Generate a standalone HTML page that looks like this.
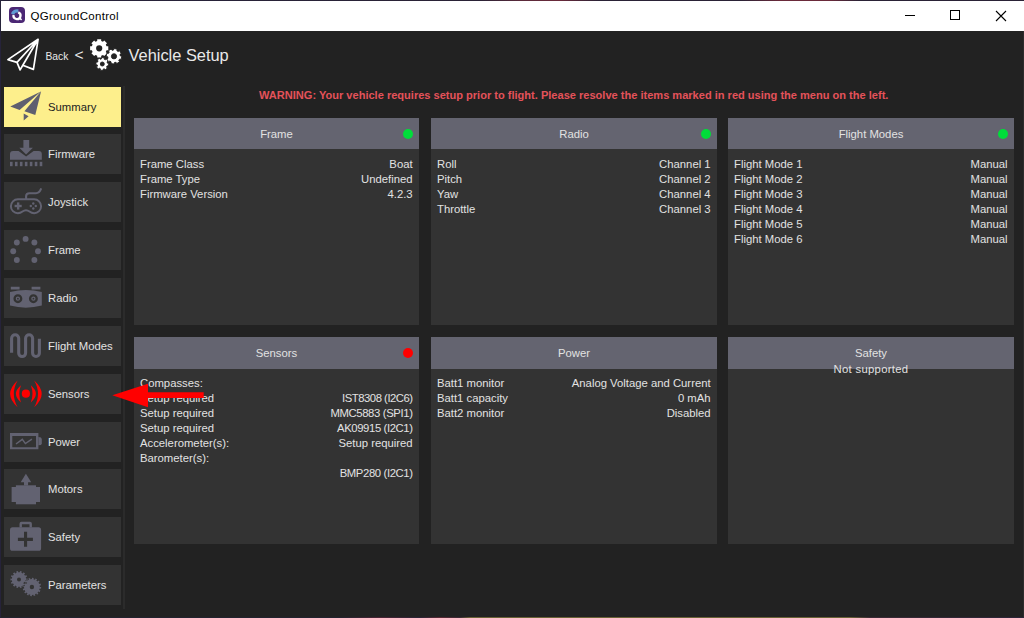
<!DOCTYPE html>
<html><head><meta charset="utf-8">
<style>
*{margin:0;padding:0;box-sizing:border-box}
html,body{width:1024px;height:618px;overflow:hidden;background:#222222;font-family:"Liberation Sans",sans-serif}
#win{position:absolute;left:0;top:0;width:1024px;height:618px;background:#222222}
#bl{position:absolute;left:0;top:0;width:1px;height:618px;background:#26233a}
#bt{position:absolute;left:0;top:0;width:1024px;height:1px;background:#2a1e2c}
#bb{position:absolute;left:0;top:617px;width:1024px;height:1px;background:#23232f}
#title{position:absolute;left:1px;top:1px;width:1023px;height:30px;background:#ffffff}
#title .t{position:absolute;left:29.5px;top:7.6px;font-size:11.5px;letter-spacing:0.28px;color:#000;line-height:14px;white-space:nowrap}
.abs{position:absolute}
.txt{position:absolute;white-space:nowrap;color:#e2e2e2;font-size:11.3px;line-height:13px}
.btn{position:absolute;left:4px;width:117px;height:40px;background:#333333}
.btn .l{position:absolute;left:44px;top:13px;font-size:11.3px;line-height:14px;color:#e2e2e2;white-space:nowrap}
.btn svg{position:absolute;left:0;top:0}
.panel{position:absolute;width:286px;background:#333333}
.panel .h{position:absolute;left:0;top:0;width:100%;height:31px;background:#646470}
.panel .h .ht{position:absolute;left:0;width:100%;top:9px;text-align:center;color:#e2e2e2;font-size:11.3px;line-height:14px}
.dot{position:absolute;width:10.5px;height:10.5px;border-radius:50%;background:#00dd33}
.row{position:absolute;left:6px;right:6.4px;height:15px;font-size:11.3px;line-height:15px;color:#e2e2e2;white-space:nowrap}
.row .r{position:absolute;right:0;top:0}
.row .lft{position:absolute;left:0;top:0}
</style></head>
<body>
<div id="win">
<div id="title">
  <svg class="abs" style="left:8px;top:6px" width="16" height="16" viewBox="0 0 16 16">
    <rect x="0" y="0" width="16" height="16" rx="4" fill="#4b2774"/>
    <path d="M9.20 5.31 A3.5 3.5 0 1 1 4.55 7.99" fill="none" stroke="#fff" stroke-width="2.3"/>
    <path d="M10.3 10.8 L12.6 12.9" stroke="#fff" stroke-width="1.5"/>
    <path d="M5.15 7.67 L1.91 6.62 A6.4 6.4 0 0 1 9.66 2.42 L8.78 5.70 A3.0 3.0 0 0 0 5.15 7.67 Z" fill="#5f9ad3"/>
  </svg>
  <div class="t">QGroundControl</div>
  <div class="abs" style="left:904px;top:14px;width:10px;height:1px;background:#000"></div>
  <div class="abs" style="left:949px;top:9px;width:10px;height:10px;border:1px solid #000"></div>
  <svg class="abs" style="left:994px;top:9px" width="12" height="12" viewBox="0 0 12 12"><path d="M1 1 L11 11 M11 1 L1 11" stroke="#000" stroke-width="1.1"/></svg>
</div>

<!-- header -->
<svg class="abs" style="left:0;top:32px" width="40" height="44" viewBox="0 32 40 44">
  <path d="M38.1 39.3 L7.9 59.6 L17 62.4 L20.1 69.9 L22.8 65.3 L33.4 69.4 Z M38.1 39.3 L17 62.4 M38.1 39.3 L22.8 65.3" fill="none" stroke="#ffffff" stroke-width="1.7" stroke-linejoin="round"/>
</svg>
<div class="txt" style="left:45.5px;top:50px;font-size:10.3px;line-height:14px;color:#e9e9e9">Back</div>
<div class="txt" style="left:74.6px;top:46px;font-size:15.5px;line-height:18px;color:#e9e9e9">&lt;</div>
<svg class="abs" id="gears" style="left:86px;top:36px" width="40" height="38" viewBox="86 36 40 38"><path fill="#ffffff" fill-rule="evenodd" d="M106.53 46.29 L108.29 46.34 L108.29 50.26 L106.53 50.31 L105.80 52.07 L107.01 53.34 L104.24 56.11 L102.97 54.90 L101.21 55.63 L101.16 57.39 L97.24 57.39 L97.19 55.63 L95.43 54.90 L94.16 56.11 L91.39 53.34 L92.60 52.07 L91.87 50.31 L90.11 50.26 L90.11 46.34 L91.87 46.29 L92.60 44.53 L91.39 43.26 L94.16 40.49 L95.43 41.70 L97.19 40.97 L97.24 39.21 L101.16 39.21 L101.21 40.97 L102.97 41.70 L104.24 40.49 L107.01 43.26 L105.80 44.53 Z M102.30 48.30 A3.1 3.1 0 1 0 96.10 48.30 A3.1 3.1 0 1 0 102.30 48.30 Z"/><path fill="#ffffff" fill-rule="evenodd" stroke="#222222" stroke-width="0.9" d="M120.29 55.88 L121.80 56.21 L121.15 59.42 L119.63 59.14 L118.74 60.45 L119.58 61.75 L116.84 63.56 L115.97 62.28 L114.42 62.59 L114.09 64.10 L110.88 63.45 L111.16 61.93 L109.85 61.04 L108.55 61.88 L106.74 59.14 L108.02 58.27 L107.71 56.72 L106.20 56.39 L106.85 53.18 L108.37 53.46 L109.26 52.15 L108.42 50.85 L111.16 49.04 L112.03 50.32 L113.58 50.01 L113.91 48.50 L117.12 49.15 L116.84 50.67 L118.15 51.56 L119.45 50.72 L121.26 53.46 L119.98 54.33 Z M116.60 56.30 A2.6 2.6 0 1 0 111.40 56.30 A2.6 2.6 0 1 0 116.60 56.30 Z"/><path fill="#ffffff" fill-rule="evenodd" stroke="#222222" stroke-width="0.9" d="M107.43 63.14 L108.76 63.27 L108.49 66.00 L107.15 65.87 L106.54 67.01 L107.38 68.05 L105.26 69.79 L104.41 68.75 L103.16 69.13 L103.03 70.46 L100.30 70.19 L100.43 68.85 L99.29 68.24 L98.25 69.08 L96.51 66.96 L97.55 66.11 L97.17 64.86 L95.84 64.73 L96.11 62.00 L97.45 62.13 L98.06 60.99 L97.22 59.95 L99.34 58.21 L100.19 59.25 L101.44 58.87 L101.57 57.54 L104.30 57.81 L104.17 59.15 L105.31 59.76 L106.35 58.92 L108.09 61.04 L107.05 61.89 Z M104.30 64.00 A2.0 2.0 0 1 0 100.30 64.00 A2.0 2.0 0 1 0 104.30 64.00 Z"/></svg>
<div class="txt" style="left:128.5px;top:46px;font-size:16.4px;line-height:19px;color:#e9e9e9">Vehicle Setup</div>
<div class="abs" style="left:123px;top:86px;width:2px;height:523px;background:#2b2b2b"></div>
<!-- warning -->
<div class="txt" style="left:259px;top:89px;font-size:11.05px;font-weight:bold;color:#e4525a">WARNING: Your vehicle requires setup prior to flight. Please resolve the items marked in red using the menu on the left.</div>

<!-- sidebar -->
<div class="btn" style="top:86.60px;background:#fdef8c"><svg id="ic0" width="44" height="40" viewBox="0 0 44 40"><path fill="#5f5f6f" d="M6.3 19.4 L36.9 4.4 L15.6 22.9 Z M37.1 4.3 L20.4 24.2 L31.3 28 Z M19.7 26.6 L24.6 29.3 L19.7 33.5 Z"/></svg><div class="l" style="color:#222">Summary</div></div>
<div class="btn" style="top:134.45px"><svg id="ic1" width="44" height="40" viewBox="0 0 44 40"><g fill="#626271"><rect x="19.4" y="6" width="5.8" height="8"/><path d="M15.3 13.8 L28.9 13.8 L22.1 20.6 Z"/><path d="M6 25.7 L6 20 Q6 16.9 9.1 16.9 L14.6 16.9 L22.1 22.4 L29.6 16.9 L34.7 16.9 Q37.8 16.9 37.8 20 L37.8 25.7 Z"/><rect x="6.00" y="27.8" width="2.6" height="4.4"/><rect x="10.95" y="27.8" width="2.6" height="4.4"/><rect x="15.90" y="27.8" width="2.6" height="4.4"/><rect x="20.85" y="27.8" width="2.6" height="4.4"/><rect x="25.80" y="27.8" width="2.6" height="4.4"/><rect x="30.75" y="27.8" width="2.6" height="4.4"/><rect x="35.70" y="27.8" width="2.6" height="4.4"/></g></svg><div class="l">Firmware</div></div>
<div class="btn" style="top:182.30px"><svg id="ic2" width="44" height="40" viewBox="0 0 44 40"><g fill="none" stroke="#626271" stroke-width="2"><path d="M13.85 17.3 L30.15 17.3 A6.95 6.95 0 0 1 30.15 31.2 Q27.6 31.2 25.5 29.5 Q23.8 28.2 22 28.2 Q20.2 28.2 18.5 29.5 Q16.4 31.2 13.85 31.2 A6.95 6.95 0 0 1 13.85 17.3 Z"/><path d="M22.1 17 L22.1 14.3 Q22.1 11.2 25.5 11.2 L32 11.2 Q35.2 11.2 36.9 7.2" stroke-width="2.1" stroke-linecap="round"/></g>
<g fill="#626271"><rect x="12.95" y="20.4" width="2.4" height="7.2"/><rect x="10.6" y="22.8" width="7.1" height="2.4"/><circle cx="29.3" cy="21.5" r="1.2"/><circle cx="29.3" cy="26.5" r="1.2"/><circle cx="26.8" cy="24" r="1.2"/><circle cx="31.8" cy="24" r="1.2"/></g></svg><div class="l">Joystick</div></div>
<div class="btn" style="top:230.15px"><svg id="ic3" width="44" height="40" viewBox="0 0 44 40"><g fill="#626271"><circle cx="21.60" cy="8.90" r="2.95"/><circle cx="30.37" cy="12.53" r="2.95"/><circle cx="34.00" cy="21.30" r="2.95"/><circle cx="30.37" cy="30.07" r="2.95"/><circle cx="12.83" cy="30.07" r="2.95"/><circle cx="9.20" cy="21.30" r="2.95"/><circle cx="12.83" cy="12.53" r="2.95"/></g></svg><div class="l">Frame</div></div>
<div class="btn" style="top:278.00px"><svg id="ic4" width="44" height="40" viewBox="0 0 44 40"><g fill="#626271"><path d="M6.8 8.8 L15.6 8.8 L15.6 11.6 L6.8 11.6 Z M27.6 8.8 L36.4 8.8 L36.4 11.6 L27.6 11.6 Z"/>
<path d="M6 13.9 Q21.9 10 37.8 13.9 L37.8 27.5 Q21.9 31.8 6 27.5 Z"/></g>
<g fill="none" stroke="#333333" stroke-width="2.3"><circle cx="13.9" cy="20.7" r="3.3"/><circle cx="29.4" cy="20.7" r="3.3"/></g>
<g fill="#333333"><circle cx="13.9" cy="20.7" r="0.9"/><circle cx="29.4" cy="20.7" r="0.9"/></g></svg><div class="l">Radio</div></div>
<div class="btn" style="top:325.85px"><svg id="ic5" width="44" height="40" viewBox="0 0 44 40"><path fill="none" stroke="#626271" stroke-width="3.1" d="M7.6 26.7 L7.6 12.3 A3.55 3.55 0 0 1 14.7 12.3 L14.7 27.1 A3.45 3.45 0 0 0 21.6 27.1 L21.6 12.3 A3.5 3.5 0 0 1 28.6 12.3 L28.6 27.1 A3.4 3.4 0 0 0 35.4 27.1 L35.4 12.7"/></svg><div class="l">Flight Modes</div></div>
<div class="btn" style="top:373.70px"><svg id="ic6" width="44" height="40" viewBox="0 0 44 40"><g fill="#ff0000"><circle cx="21.9" cy="19.7" r="4.1"/><path d="M13.6 6.4 Q-1.40 19.85 13.60 33.30 Q6.00 19.85 13.60 6.40 Z M17 11.2 Q6.80 19.85 17.00 28.50 Q13.60 19.85 17.00 11.20 Z M30.2 6.4 Q45.20 19.85 30.20 33.30 Q37.80 19.85 30.20 6.40 Z M26.8 11.2 Q37.00 19.85 26.80 28.50 Q30.20 19.85 26.80 11.20 Z"/></g></svg><div class="l">Sensors</div></div>
<div class="btn" style="top:421.55px"><svg id="ic7" width="44" height="40" viewBox="0 0 44 40"><g fill="#626271"><path fill-rule="evenodd" d="M6 11 L34.4 11 L34.4 27.3 L6 27.3 Z M8.3 14.1 L32 14.1 L32 25.3 L8.3 25.3 Z"/><path d="M34.4 15.1 L37 15.6 L37.8 17 L37.8 21.5 L37 22.9 L34.4 23.3 Z"/></g>
<path fill="none" stroke="#626271" stroke-width="1.5" stroke-linejoin="miter" d="M12 22 L18.3 17.4 L21.4 21.6 L27.9 17.2"/></svg><div class="l">Power</div></div>
<div class="btn" style="top:469.40px"><svg id="ic8" width="44" height="40" viewBox="0 0 44 40"><g fill="#626271"><path d="M21.9 4.7 L27.2 13.2 L16.7 13.2 Z"/><rect x="20" y="13" width="4.1" height="3.5"/><rect x="11.9" y="16.3" width="20.1" height="19"/><rect x="7.6" y="18" width="28.4" height="15"/></g></svg><div class="l">Motors</div></div>
<div class="btn" style="top:517.25px"><svg id="ic9" width="44" height="40" viewBox="0 0 44 40"><g fill="#626271"><path fill-rule="evenodd" d="M17.5 4.85 L25.9 4.85 Q27.9 4.85 27.9 6.85 L27.9 10.6 L25.5 10.6 L25.5 7.3 L17.9 7.3 L17.9 10.6 L15.5 10.6 L15.5 6.85 Q15.5 4.85 17.5 4.85 Z"/><path fill-rule="evenodd" d="M8.6 10.3 L34.5 10.3 Q37.1 10.3 37.1 12.9 L37.1 31.2 Q37.1 33.8 34.5 33.8 L8.6 33.8 Q6 33.8 6 31.2 L6 12.9 Q6 10.3 8.6 10.3 Z M20 14.7 L20 20.8 L13.9 20.8 L13.9 23.9 L20 23.9 L20 29.7 L23.1 29.7 L23.1 23.9 L28.9 23.9 L28.9 20.8 L23.1 20.8 L23.1 14.7 Z"/></g></svg><div class="l">Safety</div></div>
<div class="btn" style="top:565.10px"><svg id="ic10" width="44" height="40" viewBox="0 0 44 40"><path fill="#626271" fill-rule="evenodd" d="M22.15 13.69 L23.55 13.54 L23.55 15.46 L22.15 15.31 L21.80 16.88 L23.12 17.34 L22.28 19.08 L21.10 18.33 L20.09 19.59 L21.08 20.58 L19.58 21.78 L18.83 20.60 L17.38 21.30 L17.84 22.62 L15.96 23.05 L15.81 21.65 L14.19 21.65 L14.04 23.05 L12.16 22.62 L12.62 21.30 L11.17 20.60 L10.42 21.78 L8.92 20.58 L9.91 19.59 L8.90 18.33 L7.72 19.08 L6.88 17.34 L8.20 16.88 L7.85 15.31 L6.45 15.46 L6.45 13.54 L7.85 13.69 L8.20 12.12 L6.88 11.66 L7.72 9.92 L8.90 10.67 L9.91 9.41 L8.92 8.42 L10.42 7.22 L11.17 8.40 L12.62 7.70 L12.16 6.38 L14.04 5.95 L14.19 7.35 L15.81 7.35 L15.96 5.95 L17.84 6.38 L17.38 7.70 L18.83 8.40 L19.58 7.22 L21.08 8.42 L20.09 9.41 L21.10 10.67 L22.28 9.92 L23.12 11.66 L21.80 12.12 Z M17.00 14.50 A2.0 2.0 0 1 0 13.00 14.50 A2.0 2.0 0 1 0 17.00 14.50 Z M35.80 22.01 L37.20 22.02 L37.02 23.83 L35.65 23.56 L35.19 25.04 L36.49 25.57 L35.62 27.18 L34.46 26.40 L33.48 27.60 L34.46 28.59 L33.05 29.74 L32.28 28.58 L30.91 29.30 L31.44 30.60 L29.70 31.12 L29.43 29.75 L27.89 29.90 L27.88 31.30 L26.07 31.12 L26.34 29.75 L24.86 29.29 L24.33 30.59 L22.72 29.72 L23.50 28.56 L22.30 27.58 L21.31 28.56 L20.16 27.15 L21.32 26.38 L20.60 25.01 L19.30 25.54 L18.78 23.80 L20.15 23.53 L20.00 21.99 L18.60 21.98 L18.78 20.17 L20.15 20.44 L20.61 18.96 L19.31 18.43 L20.18 16.82 L21.34 17.60 L22.32 16.40 L21.34 15.41 L22.75 14.26 L23.52 15.42 L24.89 14.70 L24.36 13.40 L26.10 12.88 L26.37 14.25 L27.91 14.10 L27.92 12.70 L29.73 12.88 L29.46 14.25 L30.94 14.71 L31.47 13.41 L33.08 14.28 L32.30 15.44 L33.50 16.42 L34.49 15.44 L35.64 16.85 L34.48 17.62 L35.20 18.99 L36.50 18.46 L37.02 20.20 L35.65 20.47 Z M30.10 22.00 A2.2 2.2 0 1 0 25.70 22.00 A2.2 2.2 0 1 0 30.10 22.00 Z"/></svg><div class="l">Parameters</div></div>
<!-- panels -->
<div class="panel" style="left:134px;width:285px;top:118px;height:206.5px"><div class="h"><div class="ht">Frame</div></div><div class="dot" style="right:6px;top:10.5px;background:#00dd3a"></div><div class="row" style="top:38.5px"><span class="lft">Frame Class</span><span class="r">Boat</span></div><div class="row" style="top:53.5px"><span class="lft">Frame Type</span><span class="r">Undefined</span></div><div class="row" style="top:68.5px"><span class="lft">Firmware Version</span><span class="r">4.2.3</span></div></div>
<div class="panel" style="left:431px;top:118px;height:206.5px"><div class="h"><div class="ht">Radio</div></div><div class="dot" style="right:6px;top:10.5px;background:#00dd3a"></div><div class="row" style="top:38.5px"><span class="lft">Roll</span><span class="r">Channel 1</span></div><div class="row" style="top:53.5px"><span class="lft">Pitch</span><span class="r">Channel 2</span></div><div class="row" style="top:68.5px"><span class="lft">Yaw</span><span class="r">Channel 4</span></div><div class="row" style="top:83.5px"><span class="lft">Throttle</span><span class="r">Channel 3</span></div></div>
<div class="panel" style="left:728px;top:118px;height:206.5px"><div class="h"><div class="ht">Flight Modes</div></div><div class="dot" style="right:6px;top:10.5px;background:#00dd3a"></div><div class="row" style="top:38.5px"><span class="lft">Flight Mode 1</span><span class="r">Manual</span></div><div class="row" style="top:53.5px"><span class="lft">Flight Mode 2</span><span class="r">Manual</span></div><div class="row" style="top:68.5px"><span class="lft">Flight Mode 3</span><span class="r">Manual</span></div><div class="row" style="top:83.5px"><span class="lft">Flight Mode 4</span><span class="r">Manual</span></div><div class="row" style="top:98.5px"><span class="lft">Flight Mode 5</span><span class="r">Manual</span></div><div class="row" style="top:113.5px"><span class="lft">Flight Mode 6</span><span class="r">Manual</span></div></div>
<div class="panel" style="left:134px;width:285px;top:337px;height:206.5px"><div class="h" style="height:32px"><div class="ht">Sensors</div></div><div class="dot" style="right:6px;top:10.5px;background:#ff0000"></div><div class="row" style="top:38.5px"><span class="lft">Compasses:</span><span class="r"></span></div><div class="row" style="top:53.5px"><span class="lft">Setup required</span><span class="r" style="letter-spacing:-0.48px">IST8308 (I2C6)</span></div><div class="row" style="top:68.5px"><span class="lft">Setup required</span><span class="r" style="letter-spacing:-0.36px">MMC5883 (SPI1)</span></div><div class="row" style="top:83.5px"><span class="lft">Setup required</span><span class="r" style="letter-spacing:-0.39px">AK09915 (I2C1)</span></div><div class="row" style="top:98.5px"><span class="lft">Accelerometer(s):</span><span class="r">Setup required</span></div><div class="row" style="top:113.5px"><span class="lft">Barometer(s):</span><span class="r"></span></div><div class="row" style="top:128.5px"><span class="lft"></span><span class="r" style="letter-spacing:-0.38px">BMP280 (I2C1)</span></div></div>
<div class="panel" style="left:431px;top:337px;height:206.5px"><div class="h" style="height:32px"><div class="ht">Power</div></div><div class="row" style="top:38.5px"><span class="lft">Batt1 monitor</span><span class="r">Analog Voltage and Current</span></div><div class="row" style="top:53.5px"><span class="lft">Batt1 capacity</span><span class="r">0 mAh</span></div><div class="row" style="top:68.5px"><span class="lft">Batt2 monitor</span><span class="r">Disabled</span></div></div>
<div class="panel" style="left:728px;top:337px;height:206.5px"><div class="h" style="height:32px"></div><div class="txt" style="left:0;width:100%;text-align:center;top:10px">Safety</div><div class="txt" style="left:0;width:100%;text-align:center;top:26px;letter-spacing:0.3px">Not supported</div></div>
<svg class="abs" style="left:100px;top:370px" width="120" height="50" viewBox="100 370 120 50"><path d="M112.3 395.2 L148 383.8 L148 392.3 L203.7 392.3 L203.7 398 L148 398 L148 407.3 Z" fill="#ff0000"/></svg>
<div id="bt" style="background:linear-gradient(90deg,#26233a 0px,#2a2236 480px,#5a2a3a 520px,#6a2a3a 560px,#2a2236 600px,#2a2236 740px,#6a2a3a 780px,#6a2a3a 830px,#2a2236 860px,#2a2236 1024px)"></div><div id="bl"></div>
<div class="abs" style="left:1023px;top:31px;width:1px;height:586px;background:#2c2c2c"></div>
<div id="bb" style="background:linear-gradient(90deg,#23232f 0px,#23232f 340px,#4a2535 380px,#2a2435 420px,#5a2a35 440px,#3a2a35 460px,#6a6236 470px,#6a6236 850px,#3a2a35 870px,#2c2538 1024px)"></div>
</div>
</body></html>
